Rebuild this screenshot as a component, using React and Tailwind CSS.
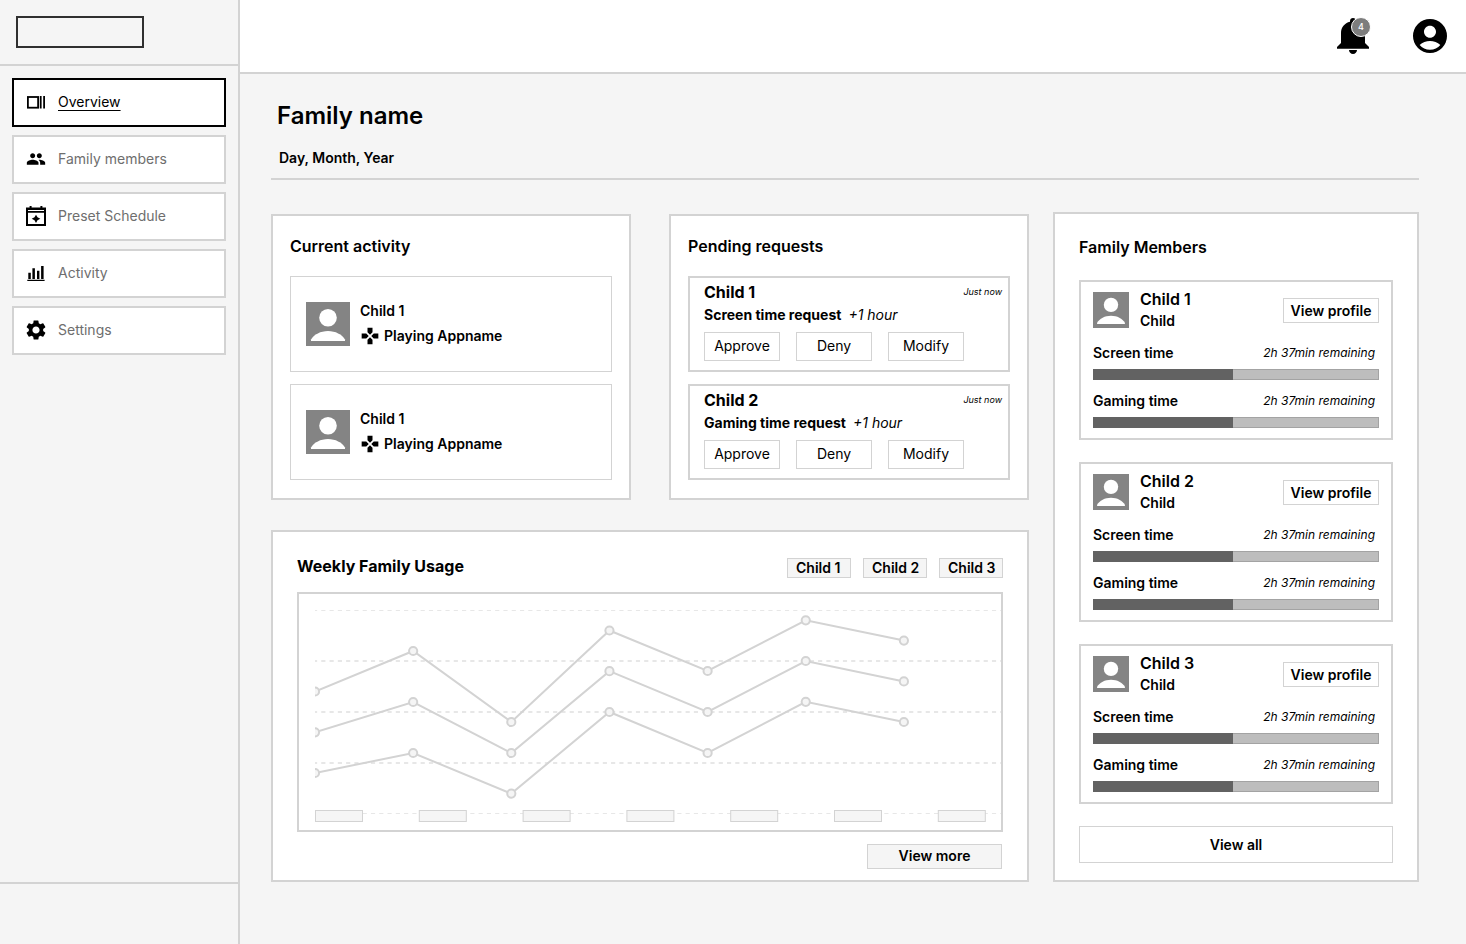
import { MdGamepad, MdPeople, MdSettings } from 'react-icons/md';

const navItems = [
    { label: 'Overview', icon: OverviewIcon, active: true },
    { label: 'Family members', icon: MdPeople },
    { label: 'Preset Schedule', icon: ScheduleIcon },
    { label: 'Activity', icon: ActivityIcon },
    { label: 'Settings', icon: GearIcon },
];

const activities = [
    { id: 1, name: 'Child 1', status: 'Playing Appname' },
    { id: 2, name: 'Child 1', status: 'Playing Appname' },
];

const requests = [
    { name: 'Child 1', type: 'Screen time request', amount: '+1 hour', when: 'Just now' },
    { name: 'Child 2', type: 'Gaming time request', amount: '+1 hour', when: 'Just now' },
];

const members = ['Child 1', 'Child 2', 'Child 3'];

const limits = [
    { label: 'Screen time', remaining: '2h 37min remaining', used: 49 },
    { label: 'Gaming time', remaining: '2h 37min remaining', used: 49 },
];

const series = [
    [97.5, 57, 128, 36.5, 77, 26.3, 46.6],
    [138.3, 108, 159, 77.2, 118, 67, 87.4],
    [179, 159, 199.6, 118, 159, 107.8, 128],
];
const pointStep = 98.15;

const gridLines = [
    { y: 16.5, width: 1 },
    { y: 67, width: 2 },
    { y: 118, width: 2 },
    { y: 169, width: 2 },
    { y: 219.5, width: 1 },
];

function OverviewIcon({ className }) {
    return (
        <svg viewBox="0 0 20 20" className={className} aria-hidden="true">
            <rect x="1.9" y="5" width="10.2" height="10.7" fill="none" stroke="currentColor" strokeWidth="1.8" />
            <path d="M13.8 4.1h1.8v12.5h-1.8zM17.2 4.1H19v12.5h-1.8z" fill="currentColor" />
        </svg>
    );
}

function ScheduleIcon({ className }) {
    return (
        <svg viewBox="0 0 20 20" className={className} aria-hidden="true">
            <path
                fillRule="evenodd"
                fill="currentColor"
                d="M3.6 0h2v1.6h8.8V0h2v1.6H20V20H0V1.6h3.6zM2 4v1h16V4zM2 6.8V18h16V6.8z"
            />
            <path d="M10 8.700l1.500 2.600 2.800 1.500-2.800 1.500L10 16.900l-1.500-2.600-2.800-1.500 2.800-1.500z" fill="currentColor" />
        </svg>
    );
}

function ActivityIcon({ className }) {
    return (
        <svg viewBox="0 0 20 20" className={className} aria-hidden="true">
            <path d="M2.300 9.700h2.500v6.200H2.300zM6.400 5.300h2.500v10.600H6.400zM11 7.800h2.400v8.100H11zM15.100 3h2.500v12.900h-2.500zM1.300 16.800h17.300v1.300H1.300z" fill="currentColor" />
        </svg>
    );
}

// the glyph leaves a margin inside its box, so it is drawn a step larger than the rest
function GearIcon() {
    return <MdSettings className="-m-0.5 size-6 shrink-0" aria-hidden="true" />;
}

function BellIcon() {
    return (
        <svg viewBox="0 0 40 40" className="size-10" aria-hidden="true">
            <path d="M20 2c1.7 0 3 1.3 3 3v.7c5.400 1.200 9 5.700 9 11.300v10l4 4v1.700H4V31l4-4V17C8 11.400 11.600 6.900 17 5.700V5c0-1.700 1.300-3 3-3z" />
            <path d="M16 34h8c0 2.200-1.800 4-4 4s-4-1.800-4-4z" />
        </svg>
    );
}

function AccountIcon() {
    return (
        <svg viewBox="0 0 24 24" className="size-10" aria-hidden="true">
            <path d="M12 1.800a10.200 10.200 0 1 0 0 20.400a10.200 10.200 0 1 0 0-20.400zM12 5.800c1.990 0 3.600 1.610 3.600 3.600S13.990 13 12 13s-3.600-1.610-3.600-3.600S10.010 5.800 12 5.800zM12 20.200c-2.500 0-4.720-1.100-6.200-2.850C7.500 15.900 9.680 15 12 15s4.500.9 6.200 2.350C16.720 19.100 14.500 20.200 12 20.200z" />
        </svg>
    );
}

function Avatar({ className }) {
    return (
        <svg viewBox="0 0 44 44" className={`shrink-0 ${className}`} aria-hidden="true">
            <path d="M0 0h44v44H0z" fill="#848484" />
            <circle cx="22" cy="15.700" r="8.800" fill="#fff" />
            <path d="M5 39v-1.500C8 32.500 14.500 29 22 29s14 3.500 17 8.500V39z" fill="#fff" />
        </svg>
    );
}

function Sidebar() {
    return (
        <aside className="flex w-60 shrink-0 flex-col border-r-2 border-[#d3d3d3]">
            <div className="border-b-2 border-[#d3d3d3] p-4">
                <div className="h-8 w-32 border-2 border-[#303030]" />
            </div>
            <nav className="flex grow flex-col gap-2 p-3">
                {navItems.map(({ label, icon: Icon, active }) => (
                    <a
                        key={label}
                        href="#"
                        aria-current={active ? 'page' : undefined}
                        className={`flex items-center gap-3 border-2 bg-white px-3 pt-3 pb-[13px] text-sm ${active ? 'border-black' : 'border-[#d3d3d3]'}`}
                    >
                        <Icon className="size-5 shrink-0" />
                        <span className={active ? 'underline underline-offset-3' : 'text-[#6e6e6e]'}>{label}</span>
                    </a>
                ))}
            </nav>
            <div className="h-[62px] border-t-2 border-[#d3d3d3]" />
        </aside>
    );
}

function TopBar() {
    return (
        <header className="flex h-[74px] items-center justify-end gap-[37px] border-b-2 border-[#d3d3d3] bg-white px-4">
            <button type="button" aria-label="Notifications" className="relative">
                <BellIcon />
                <span className="absolute top-px right-[2px] grid size-5 place-items-center rounded-full border border-white bg-[#7d7d7d] text-[9px] font-medium text-white">
                    4
                </span>
            </button>
            <button type="button" aria-label="Account">
                <AccountIcon />
            </button>
        </header>
    );
}

function CurrentActivity() {
    return (
        <section className="border-2 border-[#d3d3d3] bg-white px-[17px] py-[18px]">
            <h2 className="font-semibold">Current activity</h2>
            <ul className="mt-[18px] flex flex-col gap-3">
                {activities.map((item) => (
                    <li key={item.id} className="flex h-24 items-center gap-2.5 border border-[#d3d3d3] px-[15px] text-sm font-semibold">
                        <Avatar className="size-11" />
                        <div className="flex flex-col gap-[5px] pb-px">
                            <p>{item.name}</p>
                            <p className="flex items-center gap-1">
                                <MdGamepad className="size-5" aria-hidden="true" />
                                {item.status}
                            </p>
                        </div>
                    </li>
                ))}
            </ul>
        </section>
    );
}

function PendingRequests() {
    return (
        <section className="border-2 border-[#d3d3d3] bg-white px-[17px] py-[18px]">
            <h2 className="font-semibold">Pending requests</h2>
            <ul className="mt-[18px] flex flex-col gap-3">
                {requests.map((request) => (
                    <li key={request.name} className="h-24 border-2 border-[#d3d3d3] pt-0.5 pr-1.5 pl-3.5">
                        <div className="flex items-center justify-between">
                            <h3 className="font-bold">{request.name}</h3>
                            <span className="text-[9px] italic">{request.when}</span>
                        </div>
                        <p className="mt-px flex gap-[7px] text-sm">
                            <strong className="font-bold">{request.type}</strong>
                            <em>{request.amount}</em>
                        </p>
                        <div className="mt-[7px] flex gap-4 text-sm">
                            {['Approve', 'Deny', 'Modify'].map((action) => (
                                <button key={action} type="button" className="h-[29px] w-19 border border-[#d3d3d3] pb-px">
                                    {action}
                                </button>
                            ))}
                        </div>
                    </li>
                ))}
            </ul>
        </section>
    );
}

function UsageChart() {
    return (
        <svg viewBox="0 0 686 236" className="block w-full" role="img" aria-label="Weekly Family Usage">
            {gridLines.map((line) => (
                <line
                    key={line.y}
                    x1="0"
                    x2="686"
                    y1={line.y}
                    y2={line.y}
                    stroke="#e7e7e7"
                    strokeWidth={line.width}
                    strokeDasharray="4.140 4.140"
                    strokeDashoffset="2"
                />
            ))}
            {series.map((values) => (
                <g key={values[0]} stroke="#d3d3d3">
                    <polyline fill="none" strokeWidth="2" points={values.map((y, i) => `${i * pointStep},${y}`).join(' ')} />
                    {values.map((y, i) => (
                        <circle key={i} cx={i * pointStep} cy={y} r="4.100" fill="#f5f5f5" strokeWidth="2" />
                    ))}
                </g>
            ))}
            {Array.from({ length: 7 }, (_, i) => (
                <rect key={i} x={0.5 + i * 103.8} y="216.500" width="47" height="11" fill="#f5f5f5" stroke="#d3d3d3" />
            ))}
        </svg>
    );
}

function WeeklyUsage() {
    return (
        <section className="border-2 border-[#d3d3d3] bg-white px-6 pt-[22px] pb-[11px]">
            <div className="flex items-end justify-between">
                <h2 className="font-bold">Weekly Family Usage</h2>
                <div className="flex gap-3 text-sm font-semibold">
                    {members.map((name) => (
                        <button key={name} type="button" className="flex h-5 w-16 items-center border border-[#d3d3d3] bg-[#f5f5f5] pl-2">
                            {name}
                        </button>
                    ))}
                </div>
            </div>
            <div className="mt-3.5 border-2 border-[#d3d3d3] pl-4">
                <UsageChart />
            </div>
            <div className="mt-3 flex justify-end pr-px">
                <button type="button" className="h-[25px] w-[135px] border border-[#d3d3d3] bg-[#f5f5f5] pb-px text-sm font-semibold">
                    View more
                </button>
            </div>
        </section>
    );
}

function TimeBar({ label, remaining, used }) {
    return (
        <div className="mt-[11px]">
            <div className="flex items-center justify-between pr-1">
                <span className="text-sm font-semibold">{label}</span>
                <span className="text-xs italic">{remaining}</span>
            </div>
            <div
                className="mt-1.5 flex h-[11px]"
                role="progressbar"
                aria-label={label}
                aria-valuenow={used}
                aria-valuemin={0}
                aria-valuemax={100}
            >
                <div className="bg-[#626262]" style={{ width: `${used}%` }} />
                <div className="grow border border-l-0 border-[#a3a3a3] bg-[#bdbdbd]" />
            </div>
        </div>
    );
}

function FamilyMembers() {
    return (
        <section className="flex w-[366px] shrink-0 flex-col gap-[22px] border-2 border-[#d3d3d3] bg-white px-6 pt-[21px] pb-[17px]">
            <h2 className="-mb-px font-semibold">Family Members</h2>
            {members.map((name) => (
                <article key={name} className="border-2 border-[#d3d3d3] px-3 pt-1.5 pb-2.5">
                    <div className="flex items-center gap-[11px]">
                        <Avatar className="size-9" />
                        <div className="grow font-semibold">
                            <h3 className="leading-[22px]">{name}</h3>
                            <p className="text-sm leading-[22px]">Child</p>
                        </div>
                        <button type="button" className="h-[25px] w-24 border border-[#d3d3d3] pt-px text-sm font-semibold">
                            View profile
                        </button>
                    </div>
                    {limits.map((limit) => (
                        <TimeBar key={limit.label} {...limit} />
                    ))}
                </article>
            ))}
            <button type="button" className="h-[37px] border border-[#d3d3d3] text-sm font-semibold">
                View all
            </button>
        </section>
    );
}

export default function App() {
    return (
        <div className="flex min-h-screen bg-[#f5f5f5] font-['Inter',sans-serif] text-black">
            <Sidebar />
            <div className="min-w-0 grow">
                <TopBar />
                <main className="pt-[26px] pr-[47px] pb-8 pl-[31px]">
                    <div className="border-b-2 border-[#d3d3d3] px-1.5 pb-2.5">
                        <h1 className="text-2xl font-semibold">Family name</h1>
                        <p className="mt-4 pl-0.5 text-sm font-semibold">Day, Month, Year</p>
                    </div>
                    <div className="mt-8 flex items-end gap-6">
                        <div className="flex min-w-0 grow flex-col gap-[30px]">
                            <div className="grid grid-cols-2 gap-[38px]">
                                <CurrentActivity />
                                <PendingRequests />
                            </div>
                            <WeeklyUsage />
                        </div>
                        <FamilyMembers />
                    </div>
                </main>
            </div>
        </div>
    );
}
